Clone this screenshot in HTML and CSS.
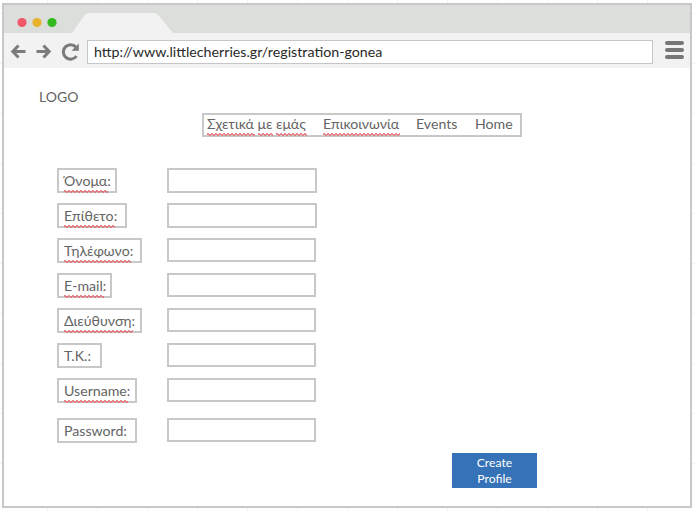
FILE: index.html
```
<!DOCTYPE html>
<html lang="el">
<head>
<meta charset="utf-8">
<title>Registration</title>
<link rel="stylesheet" href="styles.css">
</head>
<body>
<div class="browser">
  <header class="tabs">
    <svg width="180" height="28" viewBox="0 0 180 28">
      <path d="M68 28 L80 11 Q82 8 84 8 H150 Q153 8 155 11 L169 28Z" fill="#f2f2f2"/>
      <circle cx="18" cy="17.5" r="4.6" fill="#ee5867"/>
      <circle cx="33" cy="17.5" r="4.6" fill="#e9b22c"/>
      <circle cx="48" cy="17.5" r="4.6" fill="#34b91f"/>
    </svg>
  </header>
  <div class="toolbar">
    <svg class="nav-icons" width="83" height="35" viewBox="0 0 83 35" fill="none" stroke="#7b7b7b" stroke-width="3">
      <path d="M9 18.5H21.5M14.5 12.5L8.8 18.5L14.5 24.5"/>
      <path d="M32.5 18.5H45M39.5 12.5L45.2 18.5L39.5 24.5"/>
      <path d="M72 14.2A7.2 7.2 0 1 0 72.5 23"/>
      <path d="M74.8 10.5V17.8H67.5Z" fill="#7b7b7b" stroke="none"/>
    </svg>
    <div class="address"><span class="url">http://www.littlecherries.gr/registration-gonea</span></div>
    <div class="burger"><i></i><i></i><i></i></div>
  </div>
  <main>
    <div class="logo">LOGO</div>
    <nav>
      <a class="about"><span class="misspelled">Σχετικά</span> <span class="misspelled">με</span> <span class="misspelled">εμάς</span></a>
      <a class="contact"><span class="misspelled">Επικοινωνία</span></a>
      <a class="events">Events</a>
      <a class="home">Home</a>
    </nav>
    <form>
      <div class="row tall"><label class="w60"><span class="misspelled">Όνομα</span>:</label><input></div>
      <div class="row tall"><label class="w70"><span class="misspelled">Επίθετο</span>:</label><input></div>
      <div class="row"><label class="w85"><span class="misspelled">Τηλέφωνο</span>:</label><input></div>
      <div class="row"><label class="w55"><span class="misspelled">E-mail</span>:</label><input></div>
      <div class="row"><label class="w85"><span class="misspelled">Διεύθυνση</span>:</label><input></div>
      <div class="row"><label class="w45">Τ.Κ.:</label><input></div>
      <div class="row"><label class="w80"><span class="misspelled">Username</span>:</label><input></div>
      <div class="row last"><label class="w80">Password:</label><input></div>
      <button type="button">Create<br>Profile</button>
    </form>
  </main>
</div>
</body>
</html>
```
FILE: styles.css
```
* { box-sizing: border-box; }
body {
  margin: 0;
  height: 511px;
  padding: 3px 3px 3px 2px;
  overflow: hidden;
  background-color: #fff;
  background-image: linear-gradient(90deg, #f1f1f1 1px, transparent 1px), linear-gradient(#f1f1f1 1px, transparent 1px);
  background-size: 50px 50px;
  background-position: 47px 13px;
  font-family: Lato, "Noto Sans", sans-serif;
  font-size: 14.15px;
  line-height: 18px;
  color: #646464;
}
.browser {
  width: 690px;
  height: 505px;
  border: 2px solid #c8c8c8;
  background: #fff;
}
.tabs { height: 28px; background: #dcdedb; }
.tabs svg, .nav-icons { display: block; }
.toolbar { display: flex; height: 35px; background: #f2f2f2; }
.address {
  width: 566px;
  height: 24px;
  margin-top: 7px;
  padding: 2px 6px;
  border: 1px solid #c6c6c6;
  background: #fff;
  color: #2a2a2a;
  font-size: 14.24px;
}
.url { white-space: nowrap; }
.burger {
  display: flex;
  flex-direction: column;
  gap: 3px;
  margin: 8px 0 0 12px;
}
.burger i { width: 19px; height: 4px; border-radius: 2px; background: #777; }
main { padding-top: 20px; }
.logo { height: 25px; padding-left: 35px; font-size: 14px; }
nav {
  display: grid;
  grid-template-columns: 116px 93px 59px auto;
  width: 320px;
  height: 24px;
  margin-left: 198px;
  padding: 0 0 0 3px;
  border: 2px solid #c8c8c8;
  white-space: nowrap;
}
.misspelled { position: relative; display: inline-block; }
.misspelled::after {
  content: "";
  position: absolute;
  left: 0;
  right: -1px;
  top: 18px;
  height: 3px;
  opacity: 0.8;
  background:
    linear-gradient(45deg, transparent 40%, #e66a70 40%, #e66a70 65%, transparent 65%) 0 0 / 4px 3px,
    linear-gradient(-45deg, transparent 40%, #e66a70 40%, #e66a70 65%, transparent 65%) 2px 0 / 4px 3px;
}
form { padding: 31px 0 0 53px; }
.row { display: flex; width: 259px; height: 35px; align-items: flex-start; }
label {
  height: 25px;
  padding: 2px 0 0 5px;
  border: 2px solid #c8c8c8;
  white-space: nowrap;
}
input {
  width: 149px;
  height: 24px;
  margin: 0 0 0 auto;
  padding: 0 4px;
  border: 2px solid #c8c8c8;
  background: #fff;
  font: inherit;
}
.tall { width: 260px; }
.tall input { width: 150px; height: 25px; }
.last { margin-top: 5px; }
.w45 { width: 45px; }
.w55 { width: 55px; }
.w60 { width: 60px; }
.w70 { width: 70px; }
.w80 { width: 80px; }
.w85 { width: 85px; }
button {
  display: block;
  width: 85px;
  height: 35px;
  margin-left: 395px;
  padding: 0;
  border: 0;
  background: #3572b7;
  color: #fff;
  font: 12.2px/16px Lato, sans-serif;
}
```
